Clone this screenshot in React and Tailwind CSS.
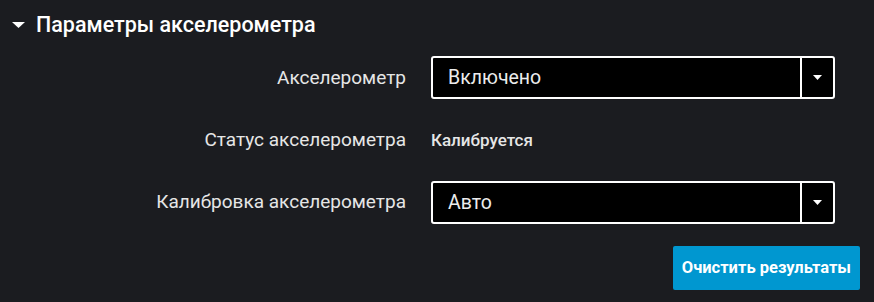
import React, { useState } from "react";

const SelectBox = ({ value }) => (
  <div className="flex h-[43px] w-[404px] rounded-[3px] border-2 border-white bg-black">
    <div className="flex flex-1 items-center pl-[15px] text-[19.5px] text-[#ececec]">
      {value}
    </div>
    <div className="flex w-[33px] items-center justify-center border-l-2 border-white">
      <svg width="9" height="5" viewBox="0 0 9 5">
        <path d="M0 0h9L4.5 5z" fill="#fff" />
      </svg>
    </div>
  </div>
);

const App = () => {
  const [open] = useState(true);

  return (
    <div
      className="h-[302px] w-[874px] bg-[#1b1c20] text-[#e6e6e6]"
      style={{ fontFamily: "Roboto, 'Noto Sans', sans-serif" }}
    >
      <div className="flex items-center gap-[11px] pl-[12px] pt-[9px]">
        <svg width="13" height="6" viewBox="0 0 13 6">
          <path d="M0 0h13L6.5 6z" fill="#fff" />
        </svg>
        <span className="text-[21.5px] font-medium text-white">
          Параметры акселерометра
        </span>
      </div>

      {open && (
        <div className="mt-[15px] grid grid-cols-[406px_404px] gap-x-[25px] gap-y-[20px]">
          <div className="flex h-[43px] items-center justify-end text-[19px]">
            Акселерометр
          </div>
          <SelectBox value="Включено" />

          <div className="flex h-[42px] items-center justify-end text-[19px]">
            Статус акселерометра
          </div>
          <div className="flex h-[42px] items-center text-[17px] font-medium">
            Калибруется
          </div>

          <div className="flex h-[42px] items-center justify-end text-[19px]">
            Калибровка акселерометра
          </div>
          <SelectBox value="Авто" />
        </div>
      )}

      <div className="mt-[22px] flex justify-end pr-[14px]">
        <button className="h-[44px] rounded-[2px] bg-[#0097d0] px-[9px] text-[16.5px] font-bold text-white">
          Очистить результаты
        </button>
      </div>
    </div>
  );
};

export default App;
